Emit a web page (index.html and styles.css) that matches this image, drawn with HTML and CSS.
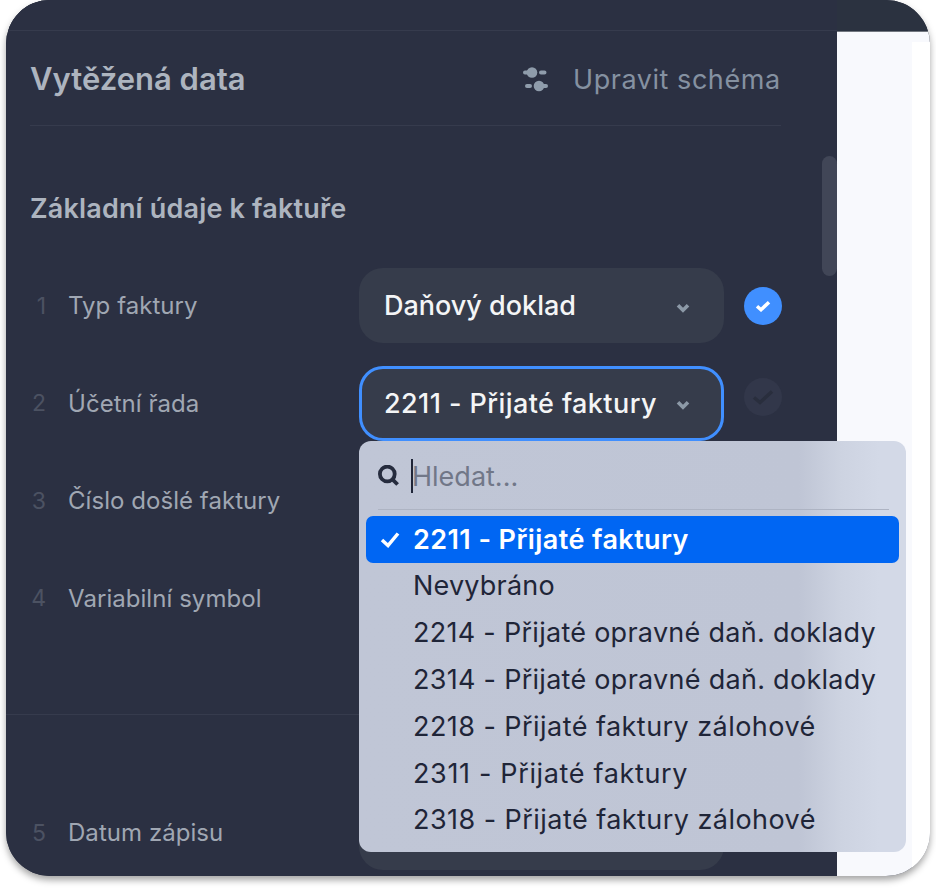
FILE: index.html
```
<!DOCTYPE html>
<html lang="cs">
<head>
    <meta charset="UTF-8">
    <meta name="viewport" content="width=device-width, initial-scale=1.0">
    <title>Vytěžená data</title>
    <link rel="stylesheet" href="styles.css">
</head>
<body>
    <div class="window">
        <div class="topbar">
            <div class="topbar-left"></div>
        </div>
        <div class="content">
            <main class="panel">
                <header class="panel-header">
                    <h1>Vytěžená data</h1>
                    <a class="edit-schema">
                        <svg width="26" height="26" viewBox="0 0 26 26" fill="#8f9cab" stroke="#8f9cab" stroke-width="4" stroke-linecap="round">
                            <path d="M2 6.500H9M18 6.500H21.500M4 20H7M16 20H23"/>
                            <circle cx="9" cy="6.500" r="5.300" stroke="none"/>
                            <circle cx="16" cy="20" r="5.300" stroke="none"/>
                        </svg>
                        <span>Upravit schéma</span>
                    </a>
                </header>

                <section class="basic">
                    <h2>Základní údaje k faktuře</h2>
                    <div class="row">
                        <span class="number">1</span>
                        <label>Typ faktury</label>
                        <div class="select">
                            <span>Daňový doklad</span>
                            <svg class="arrow" width="14" height="10" viewBox="0 0 14 10"><path d="M2 2.200L7 7.200L12 2.200"/></svg>
                        </div>
                        <span class="status done">
                            <svg width="16" height="12" viewBox="0 0 16 12"><path d="M2 6.200L6 9.700L14 2.200"/></svg>
                        </span>
                    </div>
                    <div class="row">
                        <span class="number">2</span>
                        <label>Účetní řada</label>
                        <div class="select active">
                            <span>2211 - Přijaté faktury</span>
                            <svg class="arrow" width="14" height="10" viewBox="0 0 14 10"><path d="M2 2.200L7 7.200L12 2.200"/></svg>
                            <div class="dropdown">
                                <div class="search">
                                    <svg width="22" height="22" viewBox="0 0 22 22"><circle cx="9.300" cy="9" r="7.400"/><path d="M14.700 14.700L19.600 19.500"/></svg>
                                    <span class="caret"></span>
                                    <span class="placeholder">Hledat...</span>
                                </div>
                                <ul>
                                    <li class="selected">
                                        <svg width="20" height="17" viewBox="0 0 20 17"><path d="M2 9L8 14.500L18 2.500"/></svg>
                                        <span>2211 - Přijaté faktury</span>
                                    </li>
                                    <li>Nevybráno</li>
                                    <li class="long">2214 - Přijaté opravné daň. doklady</li>
                                    <li class="long">2314 - Přijaté opravné daň. doklady</li>
                                    <li class="advance">2218 - Přijaté faktury zálohové</li>
                                    <li class="short">2311 - Přijaté faktury</li>
                                    <li class="advance">2318 - Přijaté faktury zálohové</li>
                                </ul>
                            </div>
                        </div>
                        <span class="status empty">
                            <svg width="22" height="16" viewBox="0 0 22 16"><path d="M2 8.500L8 13.500L20 2.500"/></svg>
                        </span>
                    </div>
                    <div class="row">
                        <span class="number">3</span>
                        <label>Číslo došlé faktury</label>
                    </div>
                    <div class="row">
                        <span class="number">4</span>
                        <label>Variabilní symbol</label>
                    </div>
                </section>

                <section class="dates">
                    <div class="row">
                        <span class="number">5</span>
                        <label>Datum zápisu</label>
                        <div class="select"></div>
                    </div>
                </section>
                <div class="scrollbar"></div>
            </main>
            <aside class="preview">
                <div class="page"></div>
            </aside>
        </div>
    </div>
</body>
</html>
```

FILE: styles.css
```
* {
    box-sizing: border-box;
}

body {
    margin: 0;
    height: 888px;
    overflow: hidden;
    background-color: #ffffff;
    font-family: Inter, "Liberation Sans", sans-serif;
}

.window {
    width: 924px;
    height: 876px;
    margin: 0 6px;
    border-radius: 44px;
    overflow: hidden;
    background-color: #2b3042;
    box-shadow: 0 4px 7px rgba(0, 0, 0, 0.36);
}

.topbar {
    height: 31px;
    background-color: #2b3240;
}

.topbar-left {
    width: 831px;
    height: 31px;
    background-color: #2b3042;
    border-bottom: 1px solid #363b4d;
}

.content {
    display: flex;
    height: 845px;
}

.panel {
    position: relative;
    width: 831px;
    background-color: #2b3042;
}

.panel-header {
    display: flex;
    justify-content: space-between;
    align-items: center;
    height: 95px;
    margin: 0 56px 0 24px;
    border-bottom: 1px solid #363b4d;
}

h1, h2 {
    margin: 0;
    font-weight: 600;
    color: #adb4bf;
    white-space: nowrap;
}

h1 {
    font-size: 31px;
}

.edit-schema {
    display: flex;
    align-items: center;
    gap: 24px;
    width: 258px;
    padding-top: 2px;
    font-size: 27px;
    letter-spacing: 0.55px;
    color: #8591a1;
    white-space: nowrap;
}

.edit-schema svg {
    flex: none;
}

h2 {
    height: 40px;
    line-height: 40px;
    margin-bottom: 28px;
    font-size: 27px;
    letter-spacing: 0.17px;
}

.basic {
    height: 589px;
    padding: 63px 0 0 24px;
    border-bottom: 1px solid #363b4d;
}

.dates {
    padding: 69px 0 0 24px;
}

.row {
    display: flex;
    align-items: center;
    height: 97.5px;
}

.number {
    width: 16px;
    text-align: right;
    font-size: 23px;
    color: #4c5262;
}

label {
    width: 291px;
    margin-left: 22px;
    font-size: 24px;
    letter-spacing: 0.05px;
    color: #a0a7b3;
    white-space: nowrap;
}

.select {
    position: relative;
    display: flex;
    align-items: center;
    justify-content: space-between;
    width: 365px;
    height: 75px;
    padding: 0 34px 0 25px;
    border-radius: 24px;
    background-color: #363c4b;
    color: #f4f5f6;
    font-size: 27px;
    font-weight: 500;
    white-space: nowrap;
}

.select.active {
    box-shadow: inset 0 0 0 3px #408fff;
    letter-spacing: 0.42px;
}

.arrow {
    fill: none;
    stroke: #8c99a7;
    stroke-width: 3.6;
    margin-top: 4px;
}

.status {
    display: flex;
    align-items: center;
    justify-content: center;
    width: 38px;
    height: 38px;
    margin-left: 20px;
    border-radius: 50%;
}

.status svg {
    fill: none;
    stroke-width: 3.5;
}

.done {
    background-color: #408fff;
}

.done svg {
    stroke: #ffffff;
}

.empty {
    margin-bottom: 12px;
    background-color: #32374a;
}

.empty svg {
    stroke: #292e3d;
}

.dropdown {
    position: absolute;
    top: 75px;
    left: 0;
    z-index: 2;
    width: 547px;
    height: 411px;
    border-radius: 12px;
    background: linear-gradient(to right, #c0c6d6 0, #bfc5d5 440px, #cdd3e1 482px, #d3d9e7 520px);
    color: #1f2538;
    font-weight: 400;
    letter-spacing: 0.2px;
}

.search {
    display: flex;
    align-items: center;
    height: 69px;
    margin: 0 17px 0 19px;
    padding-top: 3px;
    border-bottom: 1px solid #aeb4c3;
    color: #717788;
}

.search svg {
    fill: none;
    stroke: #262c3e;
    stroke-width: 3.8;
}

.caret {
    width: 2px;
    height: 34px;
    margin-left: 11px;
    background-color: #1f2538;
}

.placeholder {
    margin-left: -1px;
    letter-spacing: 0;
}

ul {
    margin: 6px 7px 0;
    padding: 0;
    list-style: none;
}

li {
    display: flex;
    align-items: center;
    height: 46.8px;
    padding-left: 47px;
}

li.long {
    letter-spacing: 0.28px;
}

li.advance {
    letter-spacing: 0.45px;
}

li.short {
    letter-spacing: 0.65px;
}

li.selected {
    padding-left: 14px;
    border-radius: 7px;
    background-color: #0066f3;
    color: #ffffff;
    font-weight: 600;
    letter-spacing: 0.42px;
}

li.selected svg {
    margin-right: 13px;
    fill: none;
    stroke: #ffffff;
    stroke-width: 3.5;
}

.scrollbar {
    position: absolute;
    top: 125px;
    right: 0;
    width: 15px;
    height: 120px;
    border-radius: 8px;
    background-color: #414657;
}

.preview {
    width: 93px;
    padding: 10px 0 0 75px;
    border-top: 1px solid #72777f;
    background-color: #f8f9fd;
}

.page {
    height: 834px;
    background-color: #ffffff;
}
```
